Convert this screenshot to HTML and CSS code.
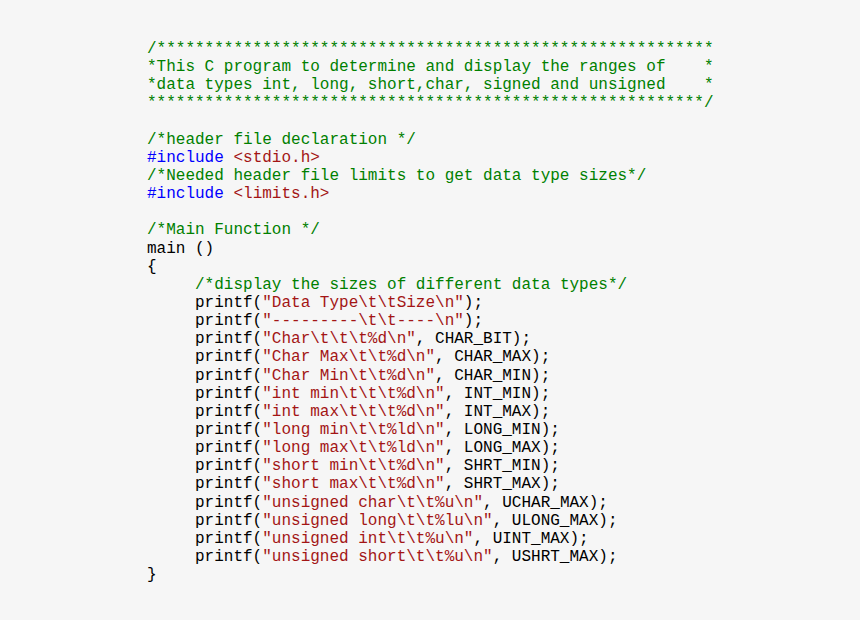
FILE: index.html
```html
<!DOCTYPE html>
<html>
<head>
<meta charset="utf-8">
<link rel="stylesheet" href="styles.css">
</head>
<body>
<pre class="code"><span class="c">/**********************************************************
*This C program to determine and display the ranges of    *
*data types int, long, short,char, signed and unsigned    *
**********************************************************/</span>

<span class="c">/*header file declaration */</span>
<span class="k">#include</span> <span class="s">&lt;stdio.h&gt;</span>
<span class="c">/*Needed header file limits to get data type sizes*/</span>
<span class="k">#include</span> <span class="s">&lt;limits.h&gt;</span>

<span class="c">/*Main Function */</span>
main ()
{
     <span class="c">/*display the sizes of different data types*/</span>
     printf(<span class="s">"Data Type\t\tSize\n"</span>);
     printf(<span class="s">"---------\t\t----\n"</span>);
     printf(<span class="s">"Char\t\t\t%d\n"</span>, CHAR_BIT);
     printf(<span class="s">"Char Max\t\t%d\n"</span>, CHAR_MAX);
     printf(<span class="s">"Char Min\t\t%d\n"</span>, CHAR_MIN);
     printf(<span class="s">"int min\t\t\t%d\n"</span>, INT_MIN);
     printf(<span class="s">"int max\t\t\t%d\n"</span>, INT_MAX);
     printf(<span class="s">"long min\t\t%ld\n"</span>, LONG_MIN);
     printf(<span class="s">"long max\t\t%ld\n"</span>, LONG_MAX);
     printf(<span class="s">"short min\t\t%d\n"</span>, SHRT_MIN);
     printf(<span class="s">"short max\t\t%d\n"</span>, SHRT_MAX);
     printf(<span class="s">"unsigned char\t\t%u\n"</span>, UCHAR_MAX);
     printf(<span class="s">"unsigned long\t\t%lu\n"</span>, ULONG_MAX);
     printf(<span class="s">"unsigned int\t\t%u\n"</span>, UINT_MAX);
     printf(<span class="s">"unsigned short\t\t%u\n"</span>, USHRT_MAX);
}</pre>
</body>
</html>
```

FILE: styles.css
```css
html, body {
  margin: 0;
  padding: 0;
  background: #f6f6f6;
}

.code {
  margin: 0;
  padding: 40px 0 0 147px;
  font-family: "Liberation Mono", "Courier New", monospace;
  font-size: 16px;
  line-height: 18.14px;
  color: #000000;
  white-space: pre;
}

.c {
  color: #008000;
}

.k {
  color: #0000ff;
}

.s {
  color: #a31515;
}
```
